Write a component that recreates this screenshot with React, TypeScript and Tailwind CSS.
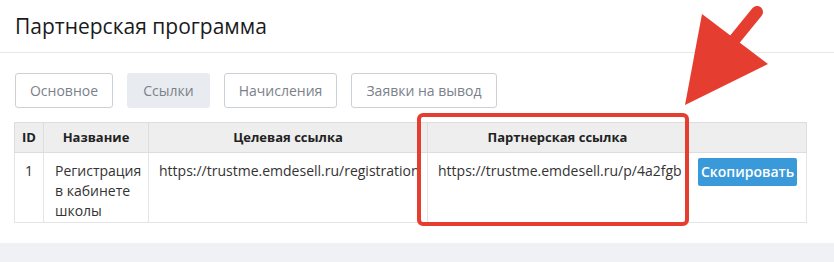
import React from "react";

const tabs = [
  { label: "Основное", w: "w-[98px]" },
  { label: "Ссылки", w: "w-[83px]" },
  { label: "Начисления", w: "w-[113px]" },
  { label: "Заявки на вывод", w: "w-[146px]" },
];

export default function App() {
  return (
    <div className="relative h-[262px] w-[834px] overflow-hidden bg-[#f0f1f5] font-['Open_Sans',sans-serif] text-[#333]">
      <div className="bg-white pb-[20px]">
        {/* Header */}
        <div className="flex h-[53px] items-center border-b border-[#e6e8ee] px-[15px]">
          <h1 className="text-[21px] leading-none text-[#1a1a1c]">Партнерская программа</h1>
        </div>

        {/* Tabs */}
        <div className="flex gap-[14px] px-[15px] pt-[20px]">
          {tabs.map((t, i) => (
            <button
              key={t.label}
              className={`h-[35px] ${t.w} rounded-[3px] text-center text-[14px] text-[#7b8189] ${
                i === 1 ? "border border-transparent bg-[#e8ecf1]" : "border border-[#ccd1d8] bg-white"
              }`}
            >
              {t.label}
            </button>
          ))}
        </div>

        {/* Table */}
        <div className="px-[14px] pt-[14px]">
          <table className="w-[792px] table-fixed border-collapse text-[14px]">
            <colgroup>
              <col className="w-[29px]" />
              <col className="w-[105px]" />
              <col className="w-[279px]" />
              <col className="w-[260px]" />
              <col className="w-[119px]" />
            </colgroup>
            <thead>
              <tr className="h-[30px] bg-[#eeeeee] text-[13px] font-bold text-[#222]">
                <th className="border border-[#dddddd] text-center">ID</th>
                <th className="border border-[#dddddd] text-center">Название</th>
                <th className="border border-[#dddddd] text-center">Целевая ссылка</th>
                <th className="border border-[#dddddd] text-center">Партнерская ссылка</th>
                <th className="border border-[#dddddd]"></th>
              </tr>
            </thead>
            <tbody>
              <tr className="h-[70px] align-top leading-[20px]">
                <td className="border border-[#e4e4e4] pt-[8px] text-center">1</td>
                <td className="border border-[#e4e4e4] px-[11px] pt-[8px]">Регистрация в кабинете школы</td>
                <td className="whitespace-nowrap border border-[#e4e4e4] px-[10px] pt-[8px]">
                  https://trustme.emdesell.ru/registration
                </td>
                <td className="whitespace-nowrap border border-[#e4e4e4] px-[10px] pt-[8px]">
                  https://trustme.emdesell.ru/p/4a2fgb
                </td>
                <td className="border border-[#e4e4e4] px-[10px] pt-[5px]">
                  <button className="h-[28px] rounded-[2px] bg-[#3a9ad9] px-[3px] text-[14px] font-semibold text-white">
                    Скопировать
                  </button>
                </td>
              </tr>
            </tbody>
          </table>
        </div>
      </div>

      {/* Annotation: red frame */}
      <div className="absolute left-[417px] top-[113px] h-[113px] w-[272px] rounded-[6px] border-[4px] border-[#e53d30]" />

      {/* Annotation: arrow */}
      <svg className="absolute left-0 top-0" width="834" height="262" viewBox="0 0 834 262">
        <line x1="757" y1="12" x2="722" y2="55" stroke="#e53d30" strokeWidth="12" strokeLinecap="round" />
        <polygon points="702,14 768,64 685,105" fill="#e53d30" />
      </svg>
    </div>
  );
}
